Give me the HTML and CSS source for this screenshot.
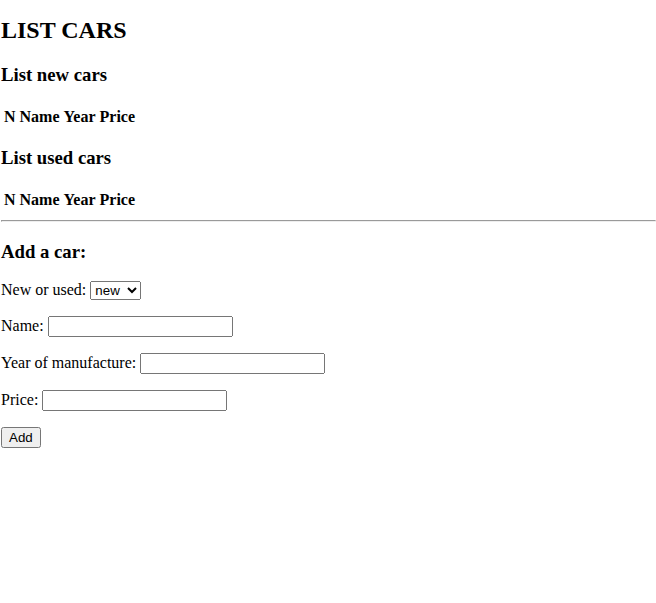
FILE: index.html
```html
<!DOCTYPE html>
<html>
<head>
<meta charset="utf-8">
<title>List cars</title>
<link rel="stylesheet" href="styles.css">
</head>
<body class="page">
<section class="cars">
<h1 class="title">LIST CARS</h1>
<h3 class="subtitle">List new cars</h3>
<table class="car-table">
<thead><tr><th>N</th><th>Name</th><th>Year</th><th>Price</th></tr></thead>
<tbody></tbody>
</table>
<h3 class="subtitle">List used cars</h3>
<table class="car-table">
<thead><tr><th>N</th><th>Name</th><th>Year</th><th>Price</th></tr></thead>
<tbody></tbody>
</table>
<hr class="divider">
<h3 class="subtitle">Add a car:</h3>
<form class="car-form">
<p class="row">New or used: <select class="field-select"><option>new</option><option>used</option></select></p>
<p class="row">Name: <input class="field" type="text"></p>
<p class="row">Year of manufacture: <input class="field" type="text"></p>
<p class="row">Price: <input class="field" type="text"></p>
<button class="btn" type="button">Add</button>
</form>
</section>
</body>
</html>
```
FILE: styles.css
```css
.page {
  margin: 0;
  padding-left: 1px;
  font-family: "Liberation Serif", serif;
  font-size: 16px;
  color: #000;
  background: #fff;
}
.title {
  font-size: 24px;
  margin: 16.92px 0 19.92px;
}
.subtitle {
  font-size: 18.72px;
  margin: 18.72px 0;
}
.car-table {
  border-spacing: 2px;
}
.car-table th {
  padding: 1px;
}
.divider {
  margin: 8px 0;
}
.row {
  margin: 16px 0;
}
.field-select, .field, .btn {
  font-family: "Liberation Sans", sans-serif;
  font-size: 13.33px;
}
```
